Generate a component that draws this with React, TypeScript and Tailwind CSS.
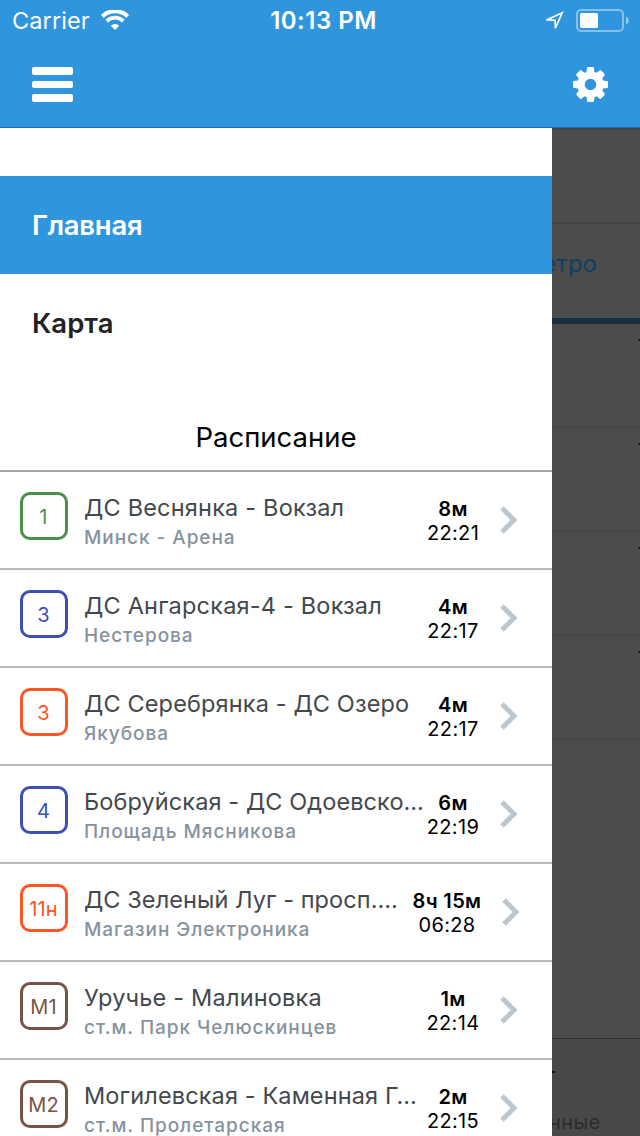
type Route = {
  code: string;
  badge: string;
  title: string;
  stop: string;
  wait: string;
  time: string;
  wide?: boolean;
  tracking: string;
};

const routes: Route[] = [
  { code: '1', badge: 'border-[#47914b] text-[#47914b]', title: 'ДС Веснянка - Вокзал', stop: 'Минск - Арена', wait: '8м', time: '22:21', tracking: 'tracking-[0.2px]' },
  { code: '3', badge: 'border-[#3b50b2] text-[#3b50b2]', title: 'ДС Ангарская-4 - Вокзал', stop: 'Нестерова', wait: '4м', time: '22:17', tracking: 'tracking-[0.2px]' },
  { code: '3', badge: 'border-[#fc5524] text-[#fc5524]', title: 'ДС Серебрянка - ДС Озеро', stop: 'Якубова', wait: '4м', time: '22:17', tracking: 'tracking-[0.14px]' },
  { code: '4', badge: 'border-[#3b50b2] text-[#3b50b2]', title: 'Бобруйская - ДС Одоевско…', stop: 'Площадь Мясникова', wait: '6м', time: '22:19', tracking: 'tracking-[0.1px]' },
  { code: '11н', badge: 'border-[#fc5524] text-[#fc5524]', title: 'ДС Зеленый Луг - просп.…', stop: 'Магазин Электроника', wait: '8ч 15м', time: '06:28', wide: true, tracking: 'tracking-[0.08px]' },
  { code: 'М1', badge: 'border-[#775447] text-[#775447]', title: 'Уручье - Малиновка', stop: 'ст.м. Парк Челюскинцев', wait: '1м', time: '22:14', tracking: 'tracking-[0.2px]' },
  { code: 'М2', badge: 'border-[#775447] text-[#775447]', title: 'Могилевская - Каменная Г…', stop: 'ст.м. Пролетарская', wait: '2м', time: '22:15', tracking: 'tracking-[0.12px]' },
];

function WifiIcon() {
  return (
    <svg width="28" height="20" viewBox="0 0 28 20" fill="none" stroke="#fff">
      <path d="M1.3 6.4a18.2 18.2 0 0 1 25.4 0" strokeWidth="4.2" />
      <path d="M5.7 11.1a11.8 11.8 0 0 1 16.6 0" strokeWidth="3.7" />
      <path d="M14 20l-4.2-4.3a6 6 0 0 1 8.400 0z" fill="#fff" stroke="none" />
    </svg>
  );
}

function LocationIcon() {
  return (
    <svg width="20" height="20" viewBox="0 0 20 20" fill="none" stroke="#fff" strokeWidth="1.600">
      <path d="M18.300 1.700L2.500 8.900l8.600.3.300 8z" />
    </svg>
  );
}

function BatteryIcon() {
  return (
    <svg width="54" height="24" viewBox="0 0 54 24" fill="none">
      <rect x="1" y="1" width="46" height="21" rx="4" stroke="#fff" strokeOpacity=".42" strokeWidth="2" />
      <rect x="4" y="4" width="18" height="15" rx="1.500" fill="#fff" />
      <path d="M50 7.500c3.700 1.500 3.700 6.500 0 8z" fill="#fff" fillOpacity=".5" />
    </svg>
  );
}

function CogIcon() {
  return (
    <svg width="35" height="35" viewBox="0 128 1536 1536" fill="#fff">
      <path d="M1024 896q0-106-75-181t-181-75-181 75-75 181 75 181 181 75 181-75 75-181zm512-109v222q0 12-8 23t-20 13l-185 28q-19 54-39 91 35 50 107 138 10 12 10 25t-9 23q-27 37-99 108t-94 71q-12 0-26-9l-138-108q-44 23-91 38-16 136-29 186-7 28-36 28h-222q-14 0-24.500-8.500t-11.500-21.500l-28-184q-49-16-90-37l-141 107q-10 9-25 9-14 0-25-11-126-114-165-168-7-10-7-23 0-12 8-23 15-21 51-66.500t54-70.500q-27-50-41-99l-183-27q-13-2-21-12.500t-8-23.500v-222q0-12 8-23t19-13l186-28q14-46 39-92-40-57-107-138-10-12-10-24 0-10 9-23 26-36 98.500-107.500t94.500-71.500q13 0 26 10l138 107q44-23 91-38 16-136 29-186 7-28 36-28h222q14 0 24.500 8.500t11.500 21.500l28 184q49 16 90 37l142-107q9-9 24-9 13 0 25 10 129 119 165 170 7 8 7 22 0 12-8 23-15 21-51 66.500t-54 70.500q26 50 41 98l183 28q13 2 21 12.500t8 23.500z" />
    </svg>
  );
}

function Header() {
  return (
    <header className="flex h-32 flex-col border-b border-[#1b70b1] bg-[#2f95dd] text-white">
      <div className="grid h-10 grid-cols-3 text-[24px] leading-10">
        <div className="flex h-10 items-center gap-[11px] pl-3">
          <span className="w-[78px] pt-px text-[23.5px] tracking-[0.1px]">Carrier</span>
          <WifiIcon />
        </div>
        <span className="pt-px pl-[7px] text-center font-semibold whitespace-nowrap tracking-[0.5px]">10:13 PM</span>
        <div className="flex h-10 items-center justify-end gap-3 pt-0.5 pr-2.5">
          <LocationIcon />
          <BatteryIcon />
        </div>
      </div>
      <div className="flex h-[87px] items-center justify-between pt-[2px] pr-[32.5px] pl-8">
        <div className="flex flex-col gap-[6.25px]">
          <span className="h-[7.250px] w-[41px] rounded-[2px] bg-white" />
          <span className="h-[7.250px] w-[41px] rounded-[2px] bg-white" />
          <span className="h-[7.250px] w-[41px] rounded-[2px] bg-white" />
        </div>
        <CogIcon />
      </div>
    </header>
  );
}

function RouteRow({ r }: { r: Route }) {
  return (
    <li className="flex h-[98px] shrink-0 border-b-2 border-[#bababa] pl-5">
      <div className={`mt-5 flex size-12 shrink-0 items-center justify-center rounded-[10px] border-3 pt-0.5 pr-px text-[20px] leading-6 tracking-[0.2px] ${r.badge}`}>
        {r.code}
      </div>
      <div className="ml-4 w-0 flex-1 whitespace-nowrap">
        <div className={`mt-5 text-[23.5px] leading-8 text-[#43484d] ${r.tracking}`}>{r.title}</div>
        <div className="pt-px text-[19px] leading-[26px] font-medium tracking-[0.95px] text-[#86939e]">{r.stop}</div>
      </div>
      <div className={`mt-[25px] w-[70px] text-center text-[20px] leading-6 whitespace-nowrap tracking-[0.35px] text-black ${r.wide ? 'mr-[20px]' : 'mr-[12px]'}`}>
        <div className="font-semibold">{r.wait}</div>
        <div>{r.time}</div>
      </div>
      <svg className={`mt-[34px] ${r.wide ? 'mr-8' : 'mr-[34px]'}`} width="18" height="28" viewBox="0 0 18 28" fill="none" stroke="#bdc6cf" strokeWidth="5">
        <path d="M2 2l12 12-12 12" />
      </svg>
    </li>
  );
}

function Backdrop() {
  return (
    <aside className="flex w-[88px] shrink-0 flex-col overflow-hidden bg-[#4c4c4c]">
      <div className="h-24 shrink-0 border-t-2 border-b-2 border-[#434343]" />
      <div className="flex h-[98px] shrink-0 items-center justify-end border-b-4 border-[#0f304a] pr-[43px] pb-[14px] text-[24px] text-[#123f61]">
        Метро
      </div>
      <div className="h-0.5 shrink-0 bg-[#2a2a2a]" />
      {[0, 1, 2, 3].map((i) => (
        <div key={i} className="flex h-[104px] shrink-0 justify-end border-b-2 border-[#484848] pt-[15px]">
          <span className="h-0.5 w-0.5 bg-[#222]" />
        </div>
      ))}
      <div className="h-[298px] shrink-0" />
      <div className="flex h-[98px] shrink-0 flex-col border-t border-[#303030] bg-[#494949]">
        <span className="mt-8 h-0.5 w-[3px] bg-[#151515]" />
        <div className="mt-[35px] flex justify-end pr-[39px] text-[20px] leading-7 tracking-[0.5px] text-[#2c2c2c]">Избранные</div>
      </div>
    </aside>
  );
}

export default function App() {
  return (
    <div className="flex h-[1136px] w-[640px] flex-col overflow-hidden bg-white font-['Inter',sans-serif]">
      <Header />
      <main className="flex h-[1008px] overflow-hidden">
        <nav className="flex w-[552px] shrink-0 flex-col pt-12">
          <div className="flex h-[98px] shrink-0 items-center bg-[#2f95dd] pt-px pl-8 text-[27.5px] font-semibold tracking-[-0.25px] text-white">Главная</div>
          <div className="flex h-[98px] shrink-0 items-center pt-px pl-8 text-[27.5px] font-semibold text-[#222]">Карта</div>
          <div className="flex h-[100px] shrink-0 items-end justify-center border-b-2 border-[#a5a5a5] pb-[13px] text-[27.5px] leading-10 text-black">Расписание</div>
          <ul className="flex flex-col">
            {routes.map((r) => (
              <RouteRow key={r.title} r={r} />
            ))}
          </ul>
        </nav>
        <Backdrop />
      </main>
    </div>
  );
}
